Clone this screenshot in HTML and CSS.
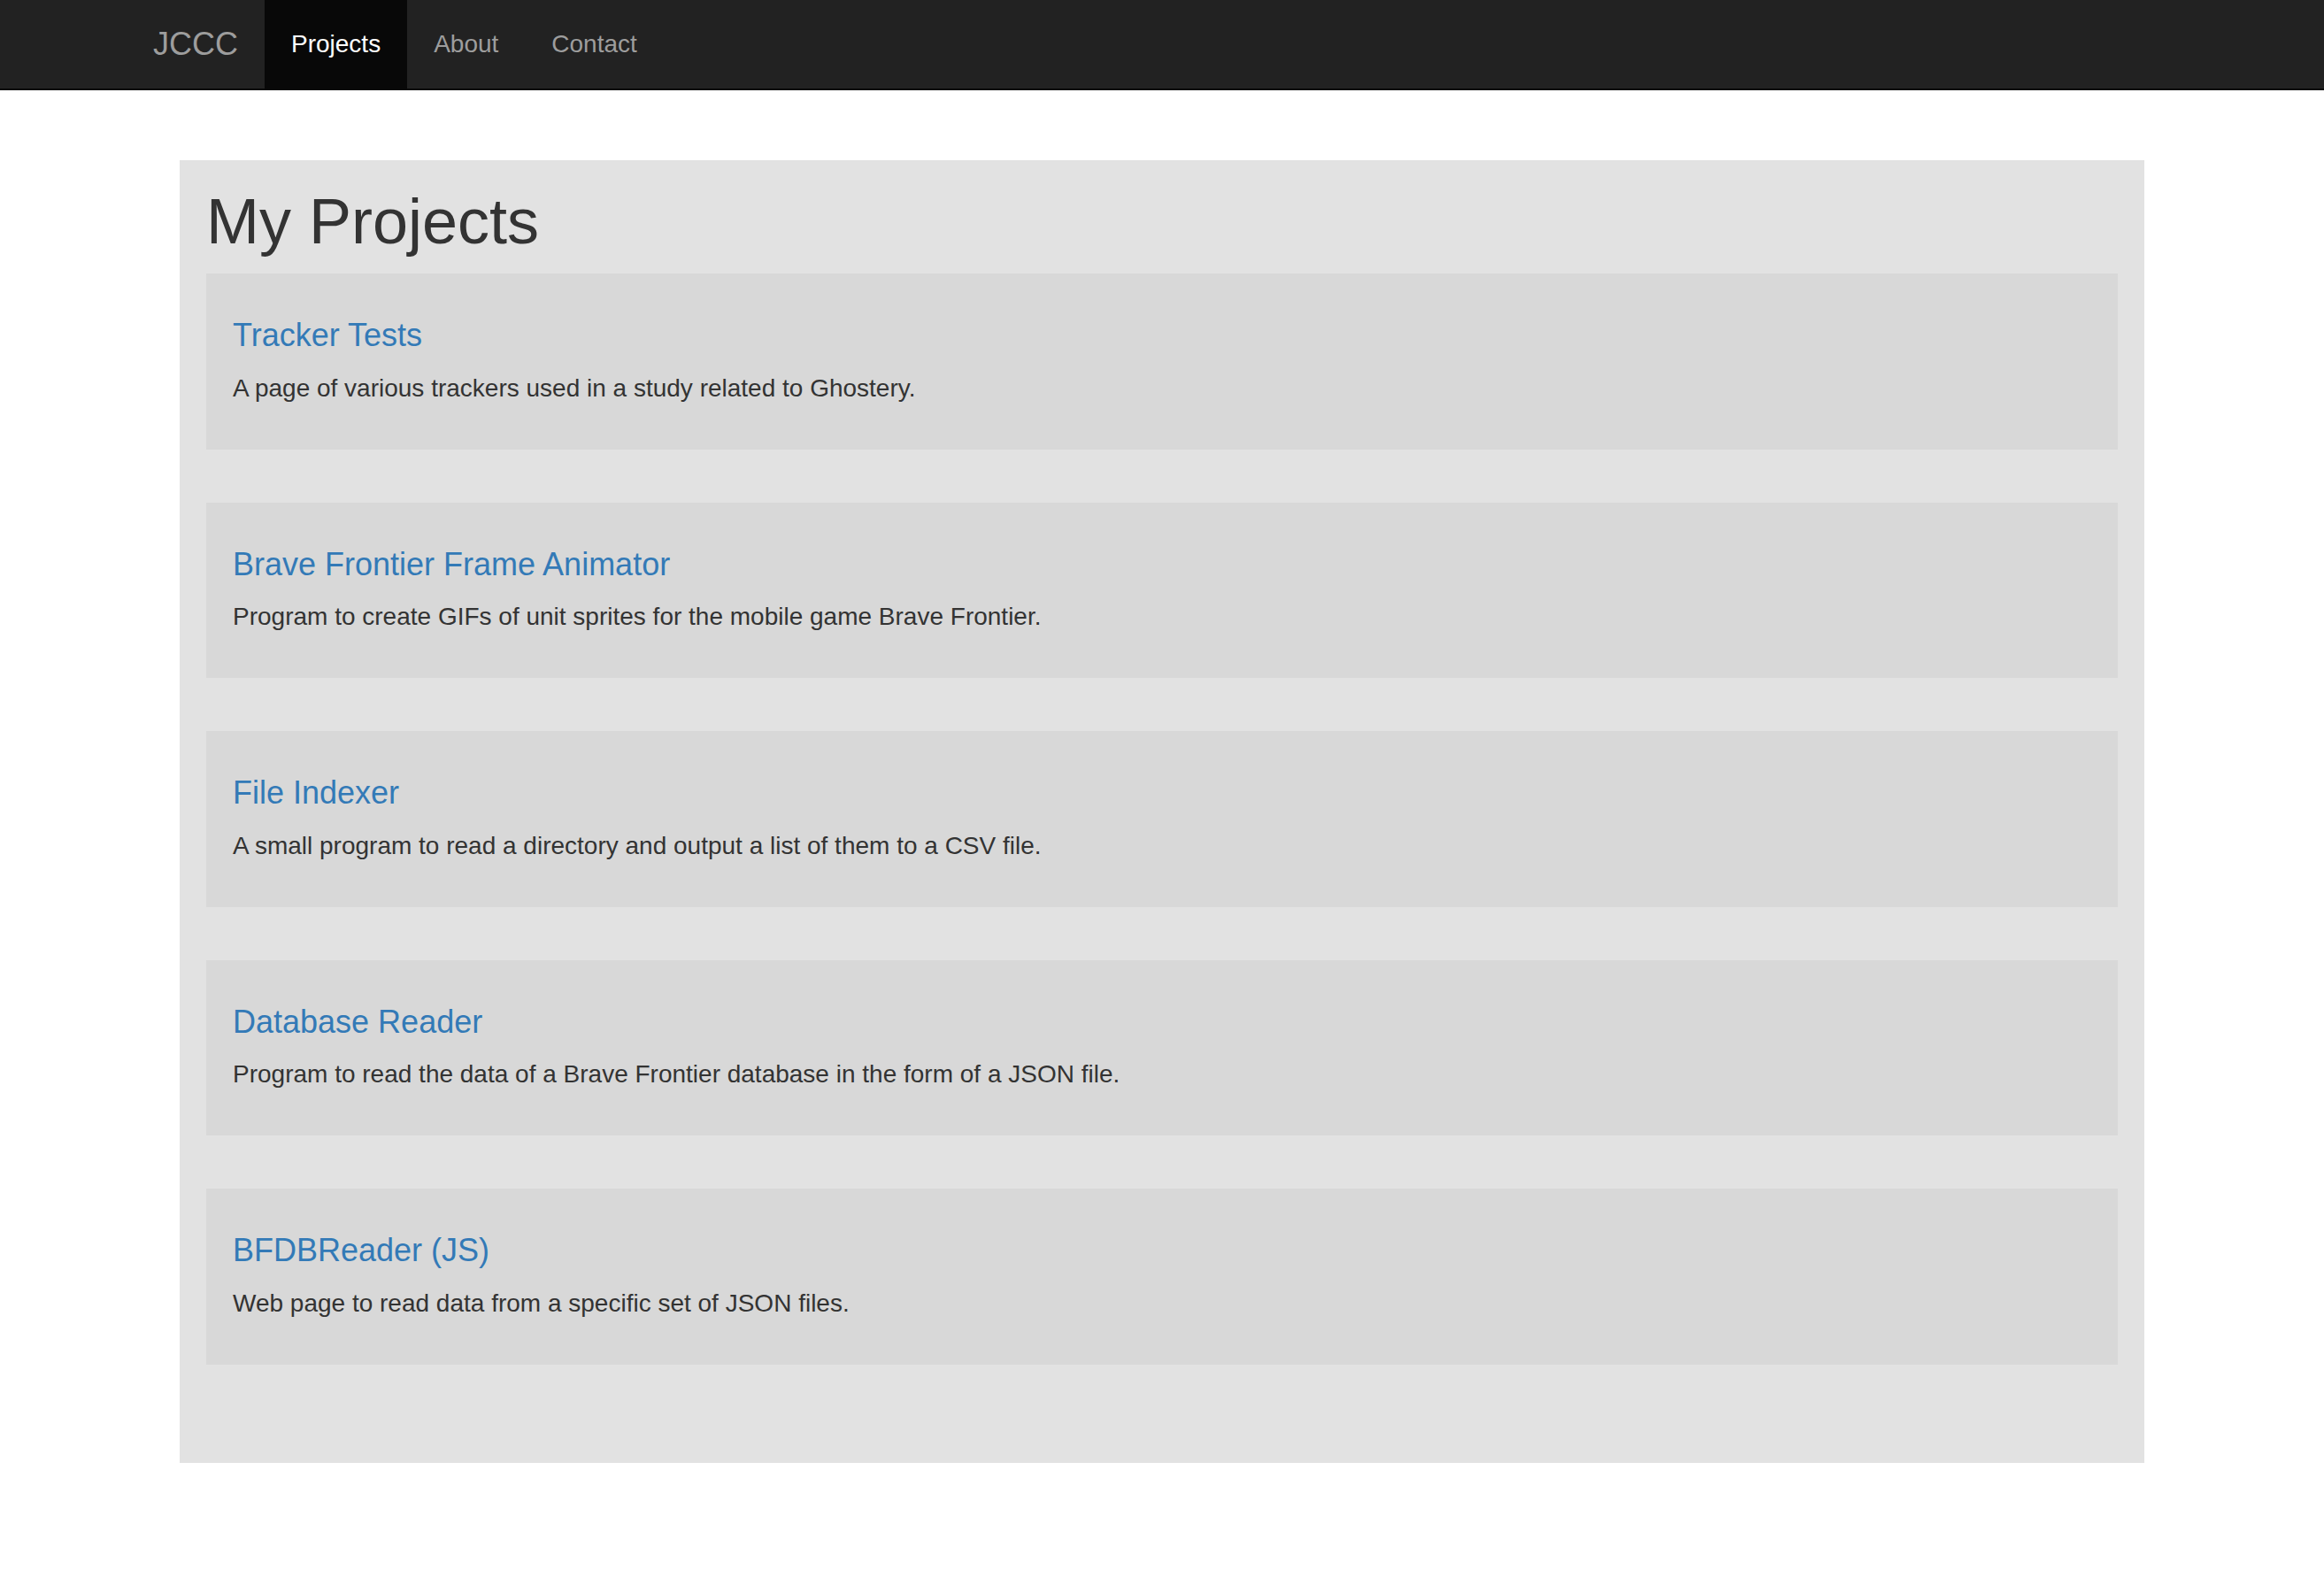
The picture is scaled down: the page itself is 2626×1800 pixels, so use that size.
FILE: index.html
```html
<!DOCTYPE html>
<html lang="en">
<head>
<meta charset="utf-8">
<title>My Projects - JCCC</title>
<link rel="stylesheet" href="styles.css">
</head>
<body>
<nav class="navbar">
  <div class="container nav-inner">
    <a class="brand" href="#">JCCC</a>
    <ul class="nav">
      <li class="nav-item active"><a href="#">Projects</a></li>
      <li class="nav-item"><a href="#">About</a></li>
      <li class="nav-item"><a href="#">Contact</a></li>
    </ul>
  </div>
</nav>
<main class="container">
  <section class="jumbotron">
    <h1 class="page-title">My Projects</h1>
    <div class="card">
      <h4 class="card-title"><a href="#">Tracker Tests</a></h4>
      <p class="card-text">A page of various trackers used in a study related to Ghostery.</p>
    </div>
    <div class="card">
      <h4 class="card-title"><a href="#">Brave Frontier Frame Animator</a></h4>
      <p class="card-text">Program to create GIFs of unit sprites for the mobile game Brave Frontier.</p>
    </div>
    <div class="card">
      <h4 class="card-title"><a href="#">File Indexer</a></h4>
      <p class="card-text">A small program to read a directory and output a list of them to a CSV file.</p>
    </div>
    <div class="card">
      <h4 class="card-title"><a href="#">Database Reader</a></h4>
      <p class="card-text">Program to read the data of a Brave Frontier database in the form of a JSON file.</p>
    </div>
    <div class="card">
      <h4 class="card-title"><a href="#">BFDBReader (JS)</a></h4>
      <p class="card-text">Web page to read data from a specific set of JSON files.</p>
    </div>
  </section>
</main>
</body>
</html>
```

FILE: styles.css
```css
* { box-sizing: border-box; }

html, body {
  margin: 0;
  padding: 0;
  background: #fff;
}

body {
  font-family: "Liberation Sans", Arial, Helvetica, sans-serif;
  font-size: 28px;
  line-height: 40px;
  color: #333;
}

a { text-decoration: none; }

.container {
  width: 2340px;
  margin: 0 auto;
  padding: 0 30px;
}

.navbar {
  background: #222;
  border-bottom: 2px solid #080808;
  height: 102px;
}

.nav-inner {
  display: flex;
  align-items: stretch;
  height: 100px;
}

.brand {
  margin-left: -30px;
  padding: 30px;
  height: 100px;
  font-size: 36px;
  line-height: 40px;
  color: #9d9d9d;
}

.nav {
  display: flex;
  list-style: none;
  margin: 0;
  padding: 0;
}

.nav-item a {
  display: block;
  padding: 30px;
  height: 100px;
  font-size: 28px;
  line-height: 40px;
  color: #9d9d9d;
}

.nav-item.active a {
  background: #080808;
  color: #fff;
}

.jumbotron {
  margin: 79px 30px 0;
  padding: 30px 30px 51px;
  background: #e2e2e2;
}

.page-title {
  margin: 0 0 20px;
  font-size: 72px;
  line-height: 78px;
  font-weight: 500;
  color: #333;
}

.card {
  background: #d8d8d8;
  padding: 30px 30px 29px;
  margin-bottom: 60px;
}

.card-title {
  margin: 20px 0 20px;
  font-size: 36px;
  line-height: 39.6px;
  font-weight: 500;
}

.card-title a { color: #337ab7; }

.card-text {
  margin: 0 0 20px;
  font-size: 28px;
  line-height: 40px;
  color: #333;
}
```
